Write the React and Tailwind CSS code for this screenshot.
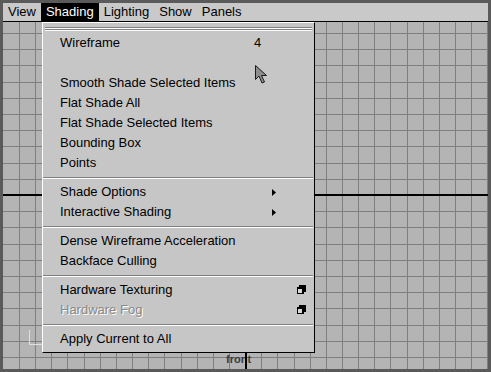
import React from "react";

const font = { fontFamily: '"Liberation Sans", Arial, sans-serif' };

function Grid() {
  const w = 485;
  const h = 347;
  const xs = [];
  for (let i = 1; 16 + 16.15 * i < w; i++) xs.push(Math.round(16 + 16.15 * i) + 0.5);
  xs.unshift(16.5);
  const ys = [];
  for (let j = 0; 11 + 16.2 * j < h; j++) ys.push(Math.round(11 + 16.2 * j) + 0.5);
  return (
    <svg width={w} height={h} className="absolute inset-0" shapeRendering="crispEdges">
      {xs.map((x) => (
        <line key={"x" + x} x1={x} y1={0} x2={x} y2={h} stroke="#7f7f7f" strokeWidth="1" />
      ))}
      {ys.map((y) => (
        <line key={"y" + y} x1={0} y1={y} x2={w} y2={y} stroke="#7f7f7f" strokeWidth="1" />
      ))}
      {/* axis */}
      <rect x={0} y={172} width={w} height={2} fill="#000" />
      {/* little axis marker */}
      <path d="M26.5 308 V322.5 H40" stroke="#dedede" fill="none" strokeWidth="1" />
    </svg>
  );
}

function Arrow() {
  return (
    <svg width="4" height="7" viewBox="0 0 4 7">
      <polygon points="0,0 4,3.5 0,7" fill="#000" />
    </svg>
  );
}

function OptionBox() {
  return (
    <svg width="9" height="10" viewBox="0 0 9 10" shapeRendering="crispEdges">
      <rect x="2" y="0" width="7" height="7" rx="1" fill="#000" />
      <rect x="0" y="2" width="7" height="7" rx="1" fill="#000" />
      <rect x="1" y="4" width="4" height="4" fill="#d8d8d8" />
    </svg>
  );
}

function Row({ label, trail, disabled }) {
  return (
    <div className="flex h-[20px] items-center">
      <span
        className={
          "w-[211px] pl-[17px] text-[13px] whitespace-nowrap " +
          (disabled ? "text-[#8a8a8a] [text-shadow:1px_1px_0_#ffffff]" : "text-black")
        }
      >
        {label}
      </span>
      {trail === "4" && <span className="text-[13px] text-black">4</span>}
      {trail === "arrow" && (
        <span className="ml-[18px] flex">
          <Arrow />
        </span>
      )}
      {trail === "box" && (
        <span className="ml-[43px] flex">
          <OptionBox />
        </span>
      )}
    </div>
  );
}

function Sep() {
  return (
    <div className="h-[9px] pt-[4px]">
      <div className="mr-[1px] h-px bg-[#808080]" />
      <div className="mr-[1px] h-px bg-white" />
    </div>
  );
}

export default function App() {
  const menus = ["View", "Shading", "Lighting", "Show", "Panels"];
  return (
    <div
      className="relative flex h-[372px] w-[491px] flex-col overflow-hidden bg-[#5a5a5a] p-[3px]"
      style={font}
    >
      <div className="flex h-[18px] bg-[#c9c9c9]">
        {menus.map((m) => (
          <div
            key={m}
            className={
              "flex items-center px-[5px] text-[13px] " +
              (m === "Shading" ? "bg-black text-white" : "text-black")
            }
          >
            {m}
          </div>
        ))}
      </div>
      <div className="h-px bg-black" />
      <div className="relative flex-1 bg-[#b4b4b4]">
        <Grid />
        <div className="absolute left-[223px] top-[332px] text-[11px] font-bold leading-none text-[#3a3a3a]">
          front
        </div>
        <div className="absolute left-[242px] top-[326px] h-[21px] w-[2px] bg-black" />
      </div>

      {/* popup menu */}
      <div className="absolute left-[42px] top-[22px] flex w-[273px] flex-col border-l border-t border-b border-r border-l-white border-t-white border-r-black border-b-black bg-[#c6c6c6] pb-[3px]">
        <div className="h-[10px] pt-[4px]">
          <div className="mx-[2px] h-px bg-[#808080]" />
          <div className="mx-[2px] h-px bg-white" />
          <div className="mx-[2px] h-px bg-[#808080]" />
          <div className="mx-[2px] h-px bg-white" />
        </div>
        <Row label="Wireframe" trail="4" />
        <Row label="" />
        <Row label="Smooth Shade Selected Items" />
        <Row label="Flat Shade All" />
        <Row label="Flat Shade Selected Items" />
        <Row label="Bounding Box" />
        <Row label="Points" />
        <Sep />
        <Row label="Shade Options" trail="arrow" />
        <Row label="Interactive Shading" trail="arrow" />
        <Sep />
        <Row label="Dense Wireframe Acceleration" />
        <Row label="Backface Culling" />
        <Sep />
        <Row label="Hardware Texturing" trail="box" />
        <Row label="Hardware Fog" trail="box" disabled />
        <Sep />
        <Row label="Apply Current to All" />
      </div>

      {/* mouse cursor */}
      <svg className="absolute left-[255px] top-[65px]" width="14" height="20" viewBox="0 0 14 20">
        <path
          d="M0.5 0.5 L0.5 14.5 L4 11 L7 18 L9.5 17 L6.5 10.5 L11.5 10.5 Z"
          fill="#8c8c8c"
          stroke="#1a1a1a"
          strokeWidth="1"
          strokeLinejoin="miter"
        />
      </svg>
    </div>
  );
}
